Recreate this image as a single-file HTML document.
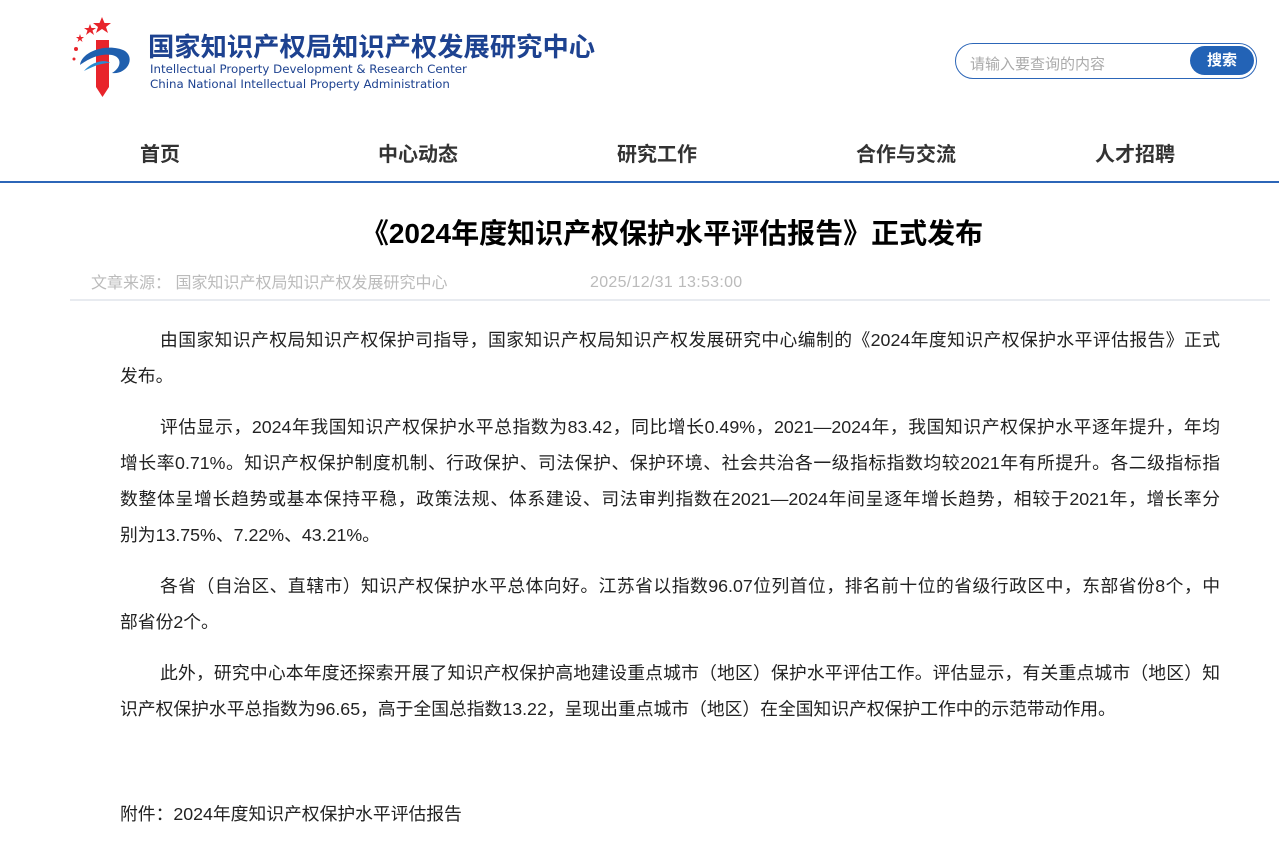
<!DOCTYPE html>
<html><head><meta charset="utf-8"><style>
body{margin:0;width:1279px;height:842px;overflow:hidden;background:#fff;font-family:"Liberation Sans","Noto Sans CJK SC",sans-serif;position:relative}
.abs{position:absolute}
.logo-cn{left:148px;top:25px;font-size:26.3px;font-weight:bold;color:#1d4290;white-space:nowrap}
.logo-en{left:150px;color:#1d4290;white-space:nowrap;font-family:"DejaVu Sans","Liberation Sans",sans-serif;font-size:11.8px}
.search{left:955px;top:43px;width:302px;height:36px;border:1.5px solid #2c66b8;border-radius:20px;box-sizing:border-box}
.search span{position:absolute;left:14px;top:9px;font-size:15px;color:#aaa}
.search b{position:absolute;right:2px;top:2px;width:64px;height:29px;border-radius:15px;background:#2363b6;color:#fff;font-size:15px;text-align:center;line-height:29px}
.nav{top:138px;font-size:20px;font-weight:bold;color:#333;transform:translateX(-50%);white-space:nowrap}
.line{left:0;top:181px;width:1279px;height:2px;background:#2c66b8}
.title{left:0;width:1344px;top:212px;text-align:center;font-size:28px;font-weight:bold;color:#000}
.meta{top:272px;font-size:16px;color:#bbb;line-height:20px;height:20px}
.sep{left:70px;top:299px;width:1200px;height:2px;background:#e8ebf0}
.body{left:120px;top:322px;width:1100px;font-size:17.8px;color:#222;line-height:36px}
.body p{margin:0 0 15px}
.body p span{display:block;white-space:nowrap;text-align:justify;text-align-last:justify}
.body p span.f{padding-left:40px}
.body p span.l{text-align-last:left}
</style></head><body>
<svg class="abs" style="left:70px;top:15px" width="65" height="82" viewBox="0 0 65 82">
<polygon points="32,2 34.5,8 41,8 36,12 38,18 32,14 26,18 28,12 23,8 29.5,8" fill="#e8242b"/>
<polygon points="20,9 21.5,13 26,13 22.5,15.5 24,20 20,17 16,20 17.5,15.5 14,13 18.5,13" fill="#e8242b"/>
<polygon points="10,19 11,22 14,22 11.5,24 12.5,27 10,25 7.5,27 8.5,24 6,22 9,22" fill="#e8242b"/>
<circle cx="6" cy="34" r="2" fill="#e8242b"/><circle cx="4" cy="44" r="1.5" fill="#e8242b"/>
<polygon points="26,25 39,25 39,72 32.5,82 26,72" fill="#e8242b"/>
<path d="M10 50 C12 35 40 28 55 36 C66 44 56 60 42 58 C52 52 52 42 42 40 C30 38 18 44 10 50Z" fill="#1f5fae"/>
<path d="M14 56 C22 46 36 44 40 48 C30 48 22 52 14 56Z" fill="#2a8ad0"/>
</svg>
<div class="abs logo-cn">国家知识产权局知识产权发展研究中心</div>
<div class="abs logo-en" style="top:62px">Intellectual Property Development &amp; Research Center</div>
<div class="abs logo-en" style="top:77px">China National Intellectual Property Administration</div>
<div class="abs search"><span>请输入要查询的内容</span><b>搜索</b></div>
<div class="abs nav" style="left:160px">首页</div>
<div class="abs nav" style="left:418px">中心动态</div>
<div class="abs nav" style="left:657px">研究工作</div>
<div class="abs nav" style="left:906px">合作与交流</div>
<div class="abs nav" style="left:1135px">人才招聘</div>
<div class="abs line"></div>
<div class="abs title">《2024年度知识产权保护水平评估报告》正式发布</div>
<div class="abs meta" style="left:91px;top:274px">文章来源：&nbsp;国家知识产权局知识产权发展研究中心</div>
<div class="abs meta" style="left:590px;letter-spacing:0.3px;top:273px">2025/12/31 13:53:00</div>
<div class="abs sep"></div>
<div class="abs body">
<p><span class="f">由国家知识产权局知识产权保护司指导，国家知识产权局知识产权发展研究中心编制的《2024年度知识产权保护水平评估报告》正式</span><span class="l">发布。</span></p>
<p><span class="f">评估显示，2024年我国知识产权保护水平总指数为83.42，同比增长0.49%，2021—2024年，我国知识产权保护水平逐年提升，年均</span><span>增长率0.71%。知识产权保护制度机制、行政保护、司法保护、保护环境、社会共治各一级指标指数均较2021年有所提升。各二级指标指</span><span>数整体呈增长趋势或基本保持平稳，政策法规、体系建设、司法审判指数在2021—2024年间呈逐年增长趋势，相较于2021年，增长率分</span><span class="l">别为13.75%、7.22%、43.21%。</span></p>
<p><span class="f">各省（自治区、直辖市）知识产权保护水平总体向好。江苏省以指数96.07位列首位，排名前十位的省级行政区中，东部省份8个，中</span><span class="l">部省份2个。</span></p>
<p><span class="f">此外，研究中心本年度还探索开展了知识产权保护高地建设重点城市（地区）保护水平评估工作。评估显示，有关重点城市（地区）知</span><span class="l">识产权保护水平总指数为96.65，高于全国总指数13.22，呈现出重点城市（地区）在全国知识产权保护工作中的示范带动作用。</span></p>
</div>
<div class="abs" style="left:120px;top:800px;font-size:17.8px;color:#222">附件：2024年度知识产权保护水平评估报告</div>
</body></html>
